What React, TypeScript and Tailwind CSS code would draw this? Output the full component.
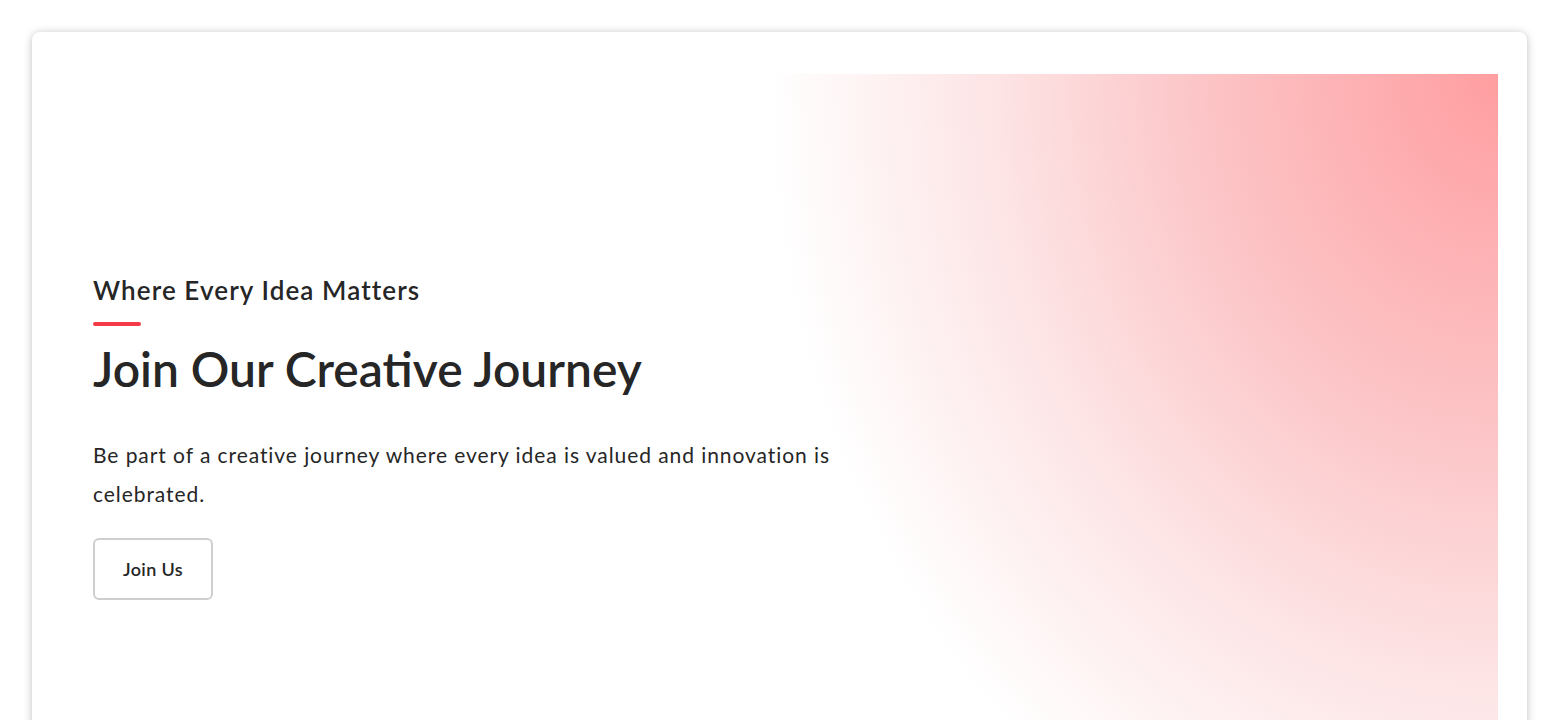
export default function App() {
  return (
    <div className="min-h-screen bg-white p-8 font-['Lato',sans-serif] text-[#262626]">
      <div className="rounded-lg bg-white px-[29px] pt-[42px] pb-[42px] shadow-[0_1px_9px_rgba(0,0,0,0.25)]">
        <div className="min-h-[820px] bg-[radial-gradient(ellipse_730px_880px_at_top_right,#ff9ea1_0%,#fcc4c6_40%,#fde3e4_68%,#ffffff_100%)] pl-8 pt-[198px]">
          <div className="w-[800px]">
            <h3 className="text-[26px] leading-[36px] font-semibold tracking-[1.1px]">Where Every Idea Matters</h3>
            <div className="mt-[14px] h-1 w-12 rounded-full bg-[#f43b47]" />
            <h1 className="mt-[13px] text-[48px] leading-[60px] font-semibold">Join Our Creative Journey</h1>
            <p className="mt-[36px] text-[21px] leading-[39px] tracking-[0.93px]">
              Be part of a creative journey where every idea is valued and innovation is celebrated.
            </p>
            <button className="mt-[25px] h-[62px] w-[120px] rounded-md border-2 border-[#cfcfcf] bg-white text-[18px] font-semibold tracking-[0.4px]">
              Join Us
            </button>
          </div>
        </div>
      </div>
    </div>
  );
}
